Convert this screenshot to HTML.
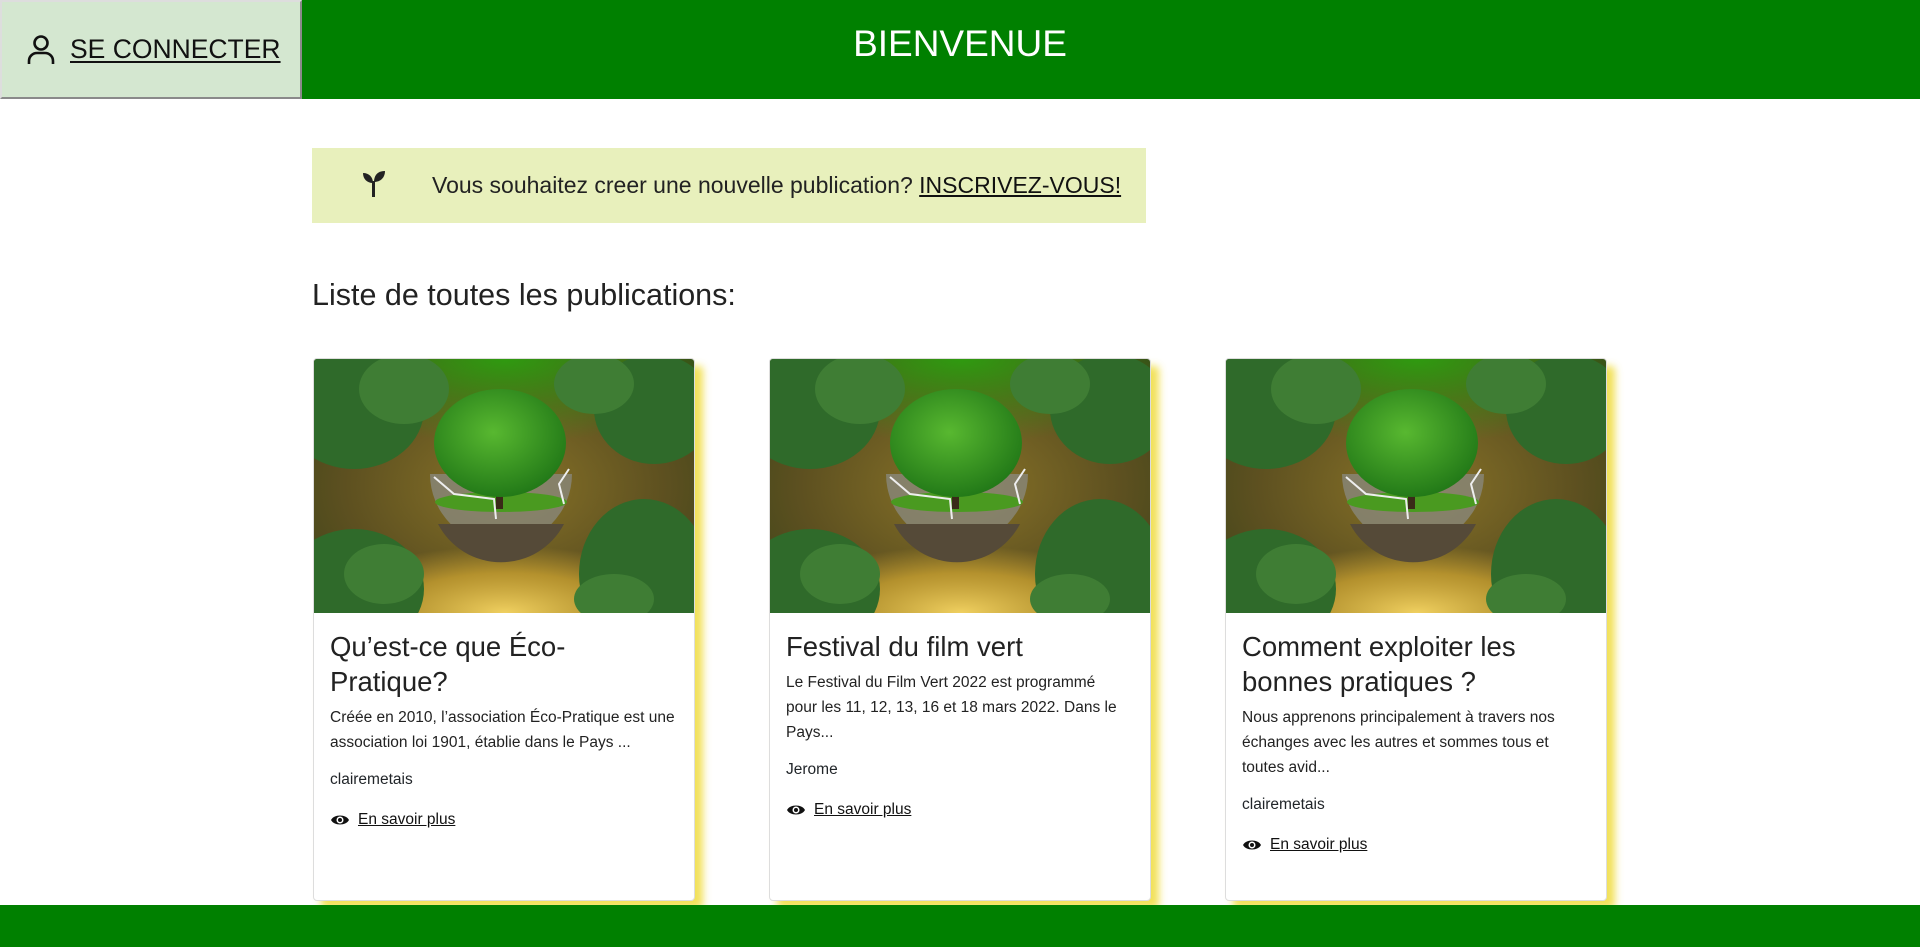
<!DOCTYPE html>
<html><head><meta charset="utf-8">
<style>
*{box-sizing:border-box;margin:0;padding:0}
body{width:1920px;height:947px;overflow:hidden;background:#fff;font-family:"Liberation Sans",sans-serif;color:#212529;position:relative}
.hdr{position:absolute;left:0;top:0;width:1920px;height:99px;background:#008000}
.hdr h1{position:absolute;left:0;width:1920px;top:23px;text-align:center;color:#fff;font-weight:400;font-size:37px}
.login{position:absolute;left:0;top:0;width:302px;height:99px;background:#d4e7d0;border:2px solid #8a8a8a;border-top-color:#ddd;border-left-color:#ddd;display:flex;align-items:center;padding-left:24px}
.login span{font-size:26.5px;color:#111;text-decoration:underline;margin-left:14px;text-underline-offset:3px}
.banner{position:absolute;left:312px;top:148px;width:834px;height:75px;background:#e8f0bc;display:flex;align-items:center}
.banner .t{position:absolute;left:120px;font-size:23px;color:#222}
.banner u{color:#111}
h2{position:absolute;left:312px;top:278px;font-size:30.5px;font-weight:400;color:#222}
.card{position:absolute;top:358px;width:382px;height:543px;background:#fff;border:1px solid #ddd;border-radius:4px;box-shadow:8px 8px 8px rgba(240,220,60,.85);overflow:hidden}
.card svg{display:block}
.cb{padding:16px 16px}
.cb h3{font-size:27.5px;font-weight:400;line-height:35px;margin-bottom:6px;color:#222}
.cb p{font-size:15.5px;line-height:25px;color:#222}
.cb .a{margin-top:16px;font-size:15.5px}
.cb .l{margin-top:22px;font-size:15.5px;display:flex;align-items:center}
.cb .l u{margin-left:8px;color:#111}
.ftr{position:absolute;left:0;top:905px;width:1920px;height:42px;background:#008000}
</style></head><body>
<div class="hdr"><h1>BIENVENUE</h1></div>
<div class="login">
<svg width="30" height="32" viewBox="0 0 30 32"><circle cx="15" cy="9" r="6.5" fill="none" stroke="#111" stroke-width="2.6"/><path d="M3 30 v-3 a8 8 0 0 1 8-8 h8 a8 8 0 0 1 8 8 v3" fill="none" stroke="#111" stroke-width="2.6"/></svg>
<span>SE CONNECTER</span></div>
<div class="banner">
<svg style="position:absolute;left:48px;top:21px" width="28" height="30" viewBox="0 0 28 30"><path d="M13 28 V14 C13 8 9 4 3 4 C3 10 7 14 13 14" fill="#222"/><path d="M14 13 C14 6 18 2 25 2 C25 9 20 13 14 13Z" fill="#222"/><rect x="12" y="12" width="3" height="16" fill="#222"/></svg>
<div class="t">Vous souhaitez creer une nouvelle publication? <u>INSCRIVEZ-VOUS!</u></div></div>
<h2>Liste de toutes les publications:</h2>

<div class="card" style="left:313px">
<svg width="382" height="254" viewBox="0 0 382 254"><defs>
<radialGradient id="bg" cx=".5" cy=".5" r=".7"><stop offset="0" stop-color="#8a7428"/><stop offset=".6" stop-color="#5d5020"/><stop offset="1" stop-color="#3a4418"/></radialGradient>
<radialGradient id="top" cx=".5" cy="0" r=".6"><stop offset="0" stop-color="#2f9a10"/><stop offset="1" stop-color="#2f9a10" stop-opacity="0"/></radialGradient>
<radialGradient id="bok" cx=".5" cy="1" r=".5"><stop offset="0" stop-color="#f0d060"/><stop offset=".6" stop-color="#c8a030" stop-opacity=".8"/><stop offset="1" stop-color="#c8a030" stop-opacity="0"/></radialGradient>
<radialGradient id="tr" cx=".45" cy=".4" r=".6"><stop offset="0" stop-color="#58b830"/><stop offset="1" stop-color="#237a18"/></radialGradient>
</defs>
<rect width="382" height="254" fill="url(#bg)"/>
<rect width="382" height="140" fill="url(#top)"/>
<rect y="120" width="382" height="134" fill="url(#bok)"/>
<g fill="#2f6a2a"><ellipse cx="40" cy="50" rx="70" ry="60"/><ellipse cx="340" cy="50" rx="60" ry="55"/><ellipse cx="40" cy="230" rx="70" ry="60"/><ellipse cx="330" cy="215" rx="65" ry="75"/></g>
<g fill="#3f7d34"><ellipse cx="90" cy="30" rx="45" ry="35"/><ellipse cx="280" cy="25" rx="40" ry="30"/><ellipse cx="70" cy="215" rx="40" ry="30"/><ellipse cx="300" cy="240" rx="40" ry="25"/></g>
<path d="M116 115 A71 71 0 0 0 258 115 Z" fill="#8a8a80" opacity=".75"/>
<path d="M124 165 A71 71 0 0 0 250 165 Z" fill="#554a38"/>
<ellipse cx="187" cy="143" rx="66" ry="10" fill="#4a9a20"/>
<rect x="182" y="110" width="7" height="40" fill="#3a2a18"/>
<ellipse cx="186" cy="84" rx="66" ry="54" fill="url(#tr)"/>
<path d="M120 118 L140 135 L180 140 L182 160 M255 110 L245 125 L250 145" stroke="#eee" stroke-width="2" fill="none"/>
</svg>
<div class="cb"><h3>Qu’est-ce que Éco-<br>Pratique?</h3><p>Créée en 2010, l’association Éco-Pratique est une<br>association loi 1901, établie dans le Pays ...</p><div class="a">clairemetais</div><div class="l"><svg width="20" height="14" viewBox="0 0 20 14"><path d="M1 7 C4 1 16 1 19 7 C16 13 4 13 1 7Z" fill="#111"/><circle cx="10" cy="7" r="3.5" fill="#fff"/><circle cx="10" cy="7" r="2" fill="#111"/></svg><u>En savoir plus</u></div></div>
</div>

<div class="card" style="left:769px">
<svg width="382" height="254" viewBox="0 0 382 254">
<rect width="382" height="254" fill="url(#bg)"/>
<rect width="382" height="140" fill="url(#top)"/>
<rect y="120" width="382" height="134" fill="url(#bok)"/>
<g fill="#2f6a2a"><ellipse cx="40" cy="50" rx="70" ry="60"/><ellipse cx="340" cy="50" rx="60" ry="55"/><ellipse cx="40" cy="230" rx="70" ry="60"/><ellipse cx="330" cy="215" rx="65" ry="75"/></g>
<g fill="#3f7d34"><ellipse cx="90" cy="30" rx="45" ry="35"/><ellipse cx="280" cy="25" rx="40" ry="30"/><ellipse cx="70" cy="215" rx="40" ry="30"/><ellipse cx="300" cy="240" rx="40" ry="25"/></g>
<path d="M116 115 A71 71 0 0 0 258 115 Z" fill="#8a8a80" opacity=".75"/>
<path d="M124 165 A71 71 0 0 0 250 165 Z" fill="#554a38"/>
<ellipse cx="187" cy="143" rx="66" ry="10" fill="#4a9a20"/>
<rect x="182" y="110" width="7" height="40" fill="#3a2a18"/>
<ellipse cx="186" cy="84" rx="66" ry="54" fill="url(#tr)"/>
<path d="M120 118 L140 135 L180 140 L182 160 M255 110 L245 125 L250 145" stroke="#eee" stroke-width="2" fill="none"/>
</svg>
<div class="cb"><h3>Festival du film vert</h3><p>Le Festival du Film Vert 2022 est programmé<br>pour les 11, 12, 13, 16 et 18 mars 2022. Dans le<br>Pays...</p><div class="a">Jerome</div><div class="l"><svg width="20" height="14" viewBox="0 0 20 14"><path d="M1 7 C4 1 16 1 19 7 C16 13 4 13 1 7Z" fill="#111"/><circle cx="10" cy="7" r="3.5" fill="#fff"/><circle cx="10" cy="7" r="2" fill="#111"/></svg><u>En savoir plus</u></div></div>
</div>

<div class="card" style="left:1225px">
<svg width="382" height="254" viewBox="0 0 382 254">
<rect width="382" height="254" fill="url(#bg)"/>
<rect width="382" height="140" fill="url(#top)"/>
<rect y="120" width="382" height="134" fill="url(#bok)"/>
<g fill="#2f6a2a"><ellipse cx="40" cy="50" rx="70" ry="60"/><ellipse cx="340" cy="50" rx="60" ry="55"/><ellipse cx="40" cy="230" rx="70" ry="60"/><ellipse cx="330" cy="215" rx="65" ry="75"/></g>
<g fill="#3f7d34"><ellipse cx="90" cy="30" rx="45" ry="35"/><ellipse cx="280" cy="25" rx="40" ry="30"/><ellipse cx="70" cy="215" rx="40" ry="30"/><ellipse cx="300" cy="240" rx="40" ry="25"/></g>
<path d="M116 115 A71 71 0 0 0 258 115 Z" fill="#8a8a80" opacity=".75"/>
<path d="M124 165 A71 71 0 0 0 250 165 Z" fill="#554a38"/>
<ellipse cx="187" cy="143" rx="66" ry="10" fill="#4a9a20"/>
<rect x="182" y="110" width="7" height="40" fill="#3a2a18"/>
<ellipse cx="186" cy="84" rx="66" ry="54" fill="url(#tr)"/>
<path d="M120 118 L140 135 L180 140 L182 160 M255 110 L245 125 L250 145" stroke="#eee" stroke-width="2" fill="none"/>
</svg>
<div class="cb"><h3>Comment exploiter les<br>bonnes pratiques ?</h3><p>Nous apprenons principalement à travers nos<br>échanges avec les autres et sommes tous et<br>toutes avid...</p><div class="a">clairemetais</div><div class="l"><svg width="20" height="14" viewBox="0 0 20 14"><path d="M1 7 C4 1 16 1 19 7 C16 13 4 13 1 7Z" fill="#111"/><circle cx="10" cy="7" r="3.5" fill="#fff"/><circle cx="10" cy="7" r="2" fill="#111"/></svg><u>En savoir plus</u></div></div>
</div>

<div class="ftr"></div>
</body></html>
